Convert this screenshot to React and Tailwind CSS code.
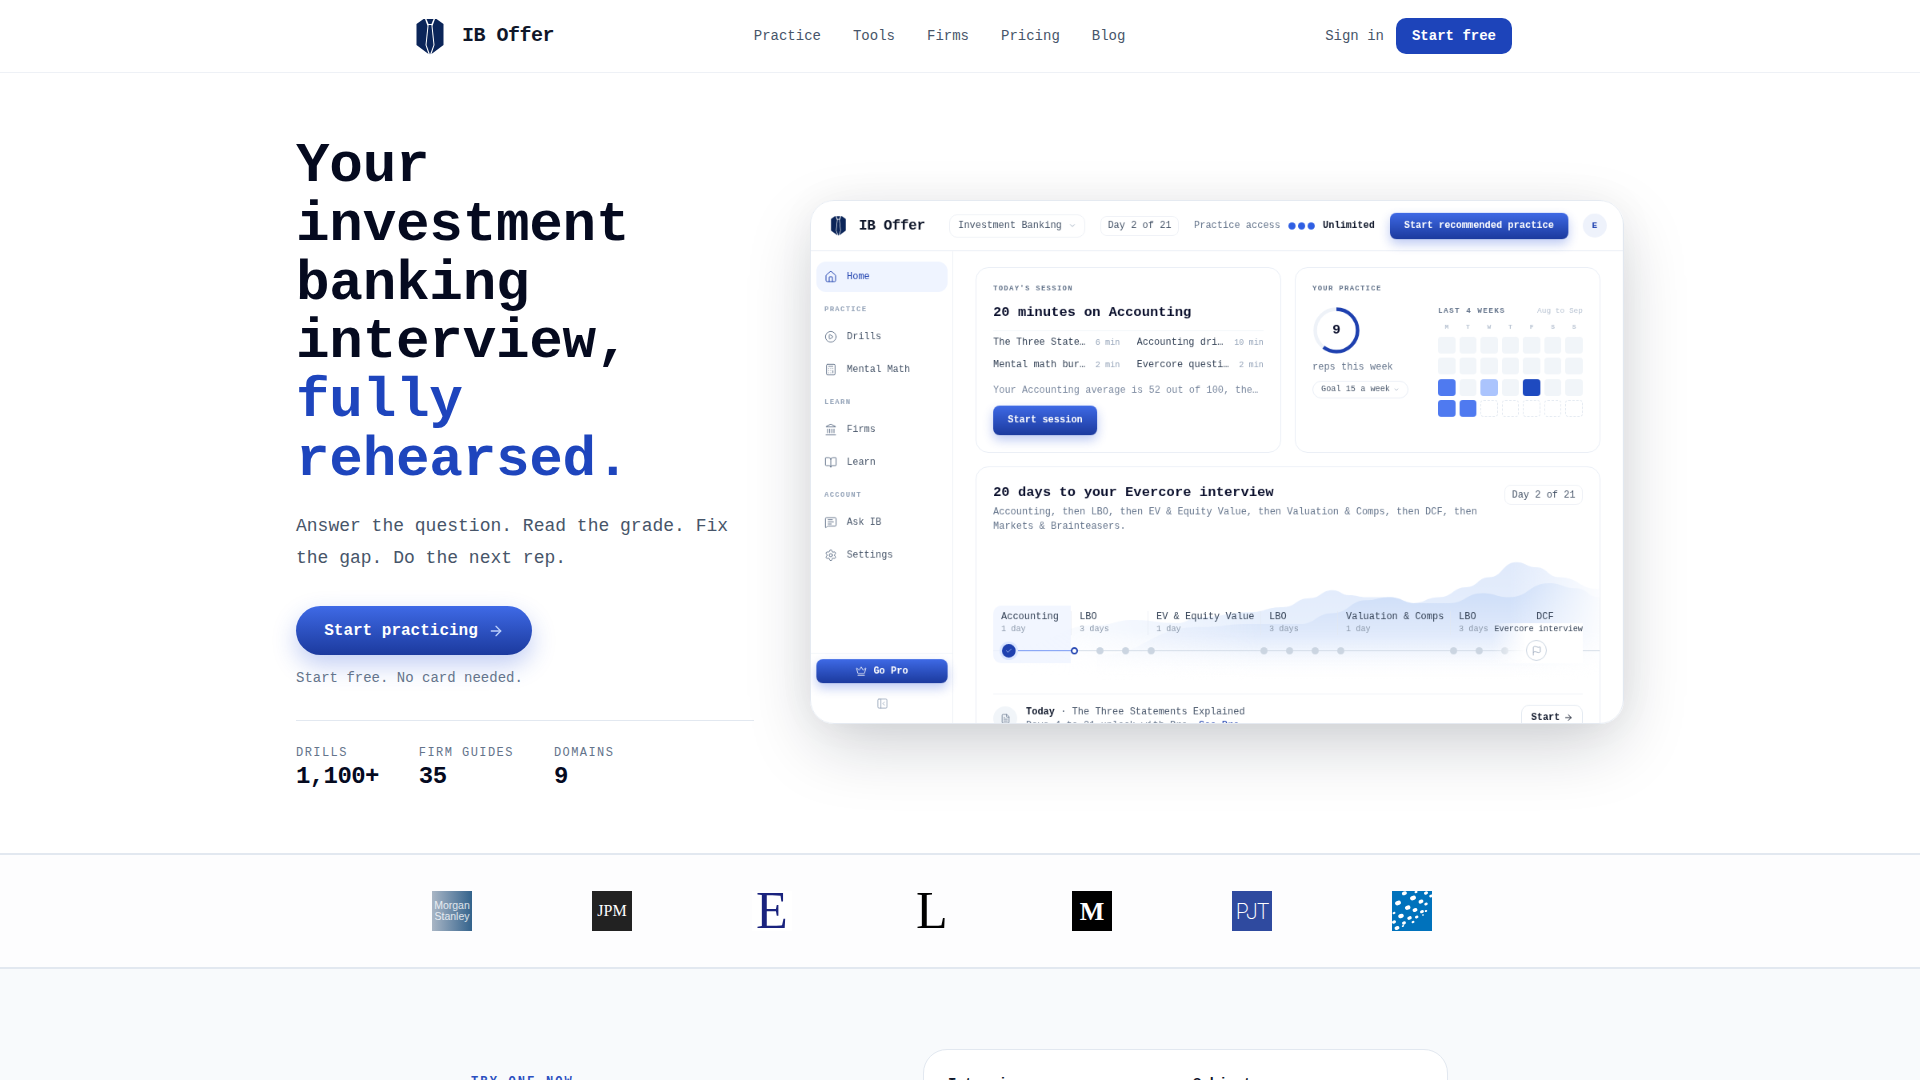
import React from 'react'
import {
    ArrowRight,
    BookOpen,
    Calculator,
    Check,
    ChevronDown,
    CirclePlay,
    Crown,
    FileText,
    Flag,
    House,
    Landmark,
    MessageSquareText,
    PanelLeftClose,
    Settings,
} from 'lucide-react'

const mono = { fontFamily: '"Liberation Mono", monospace' }

const LogoMark = ({ className }) => (
    <svg viewBox="0 0 30 38" className={className}>
        <path d="M8.5 2 L1.5 7 V28 L13.5 37 L10.5 28 L12.5 9 L10 2 Z" fill="#0b2559" />
        <path d="M21.5 2 L28.5 7 V28 L16.5 37 L19.5 28 L17.5 9 L20 2 Z" fill="#0b2559" />
        <path d="M11.5 2 H18.5 L16.5 7 H13.5 Z" fill="#0b2559" />
        <path d="M13.6 8 H16.4 L18.5 28 L15 37.5 L11.5 28 Z" fill="#0b2559" />
    </svg>
)

const blueBtn = 'bg-gradient-to-b from-[#3f6ae6] to-[#1c3a9e] text-white font-bold shadow-[0_6px_14px_rgba(37,78,216,0.3)]'

const NavItem = ({ icon: Icon, label, active }) => (
    <div className={`flex items-center gap-[12px] h-[38px] pl-[10px] rounded-[12px] text-[12px] font-medium ${active ? 'bg-[#eff4ff] text-[#1e40af]' : 'text-[#475569]'}`}>
        <Icon size={16} strokeWidth={1.5} className={active ? 'text-[#1e40af]' : 'text-[#64748b]'} />
        {label}
    </div>
)

const SideLabel = ({ children }) => (
    <div className="mt-[17px] mb-[9px] h-[11px] pl-[10px] text-[9px] leading-[11px] font-bold tracking-[0.14em] text-[#94a3b8]">{children}</div>
)

const Eyebrow = ({ children }) => (
    <div className="text-[9px] leading-[11px] font-bold tracking-[0.14em] text-[#64748b]">{children}</div>
)

const SessionItem = ({ title, mins }) => (
    <div className="flex items-center justify-between gap-3 min-w-0">
        <span className="truncate text-[12px] leading-[15px] text-[#334155]">{title}</span>
        <span className="shrink-0 text-[10.24px] text-[#94a3b8]">{mins}</span>
    </div>
)

// 0 empty, 1 light, 2 mid, 3 dark, 4 not reached yet
const calendar = [0, 0, 0, 0, 0, 0, 0, 0, 0, 0, 0, 0, 0, 0, 2, 0, 1, 0, 3, 0, 0, 2, 2, 4, 4, 4, 4, 4]
const cellStyles = {
    0: 'bg-[#f1f5f9]',
    1: 'bg-[#abc4fd]',
    2: 'bg-[#4f7af0]',
    3: 'bg-[#1e4ac0]',
    4: 'border border-dashed border-[#e2e8f0]',
}

const Track = ({ dots }) => (
    <div className="flex items-center gap-[23px] h-[30px] mt-[4.5px] relative">
        {Array.from({ length: dots }).map((_, i) => (
            <span key={i} className="w-[9px] h-[9px] rounded-full bg-[#cbd5e1]" />
        ))}
    </div>
)

const Segment = ({ name, days, width, dots, children }) => (
    <div className={`relative shrink-0 ${width}`}>
        <div className="mt-[7.5px] h-[30px] pl-[10px] border-l border-[#e2e8f0]/60">
            <div className="text-[12px] leading-[15px] font-medium whitespace-nowrap text-[#334155]">{name}</div>
            <div className="text-[10.24px] leading-[15px] text-[#8b98aa]">{days}</div>
        </div>
        {children || <Track dots={dots} />}
    </div>
)

const smooth = (pts) => {
    let d = `M${pts[0][0]} ${pts[0][1]}`
    for (let i = 1; i < pts.length; i++) {
        const [x0, y0] = pts[i - 1]
        const [x1, y1] = pts[i]
        const mx = (x0 + x1) / 2
        d += ` C${mx} ${y0} ${mx} ${y1} ${x1} ${y1}`
    }
    return d
}

const upper = [[40, 90], [120, 70], [156, 65], [200, 68], [223, 62], [273, 57], [306, 52], [333, 43], [356, 35], [373, 40], [390, 42], [413, 42], [436, 48], [463, 42], [490, 32], [513, 22], [540, 7], [560, 12], [583, 22], [623, 34]]
const lower = [[120, 100], [223, 72], [273, 69], [323, 69], [356, 58], [390, 45], [413, 42], [440, 48], [473, 48], [506, 38], [533, 42], [573, 28], [600, 33], [623, 42]]

const Ridges = () => (
    <svg viewBox="0 0 623 125" className="absolute left-0 top-[110px] w-[779px] h-[156px]">
        <defs>
            <linearGradient id="fadeUp" x1="0" y1="0" x2="0" y2="125" gradientUnits="userSpaceOnUse">
                <stop offset="0" stopColor="#dfe9fb" />
                <stop offset="0.6" stopColor="#e8f0fd" />
                <stop offset="1" stopColor="#ffffff" stopOpacity="0" />
            </linearGradient>
            <linearGradient id="fadeLow" x1="0" y1="0" x2="0" y2="125" gradientUnits="userSpaceOnUse">
                <stop offset="0.2" stopColor="#c9dbf8" />
                <stop offset="0.65" stopColor="#dfe9fb" stopOpacity="0.8" />
                <stop offset="1" stopColor="#ffffff" stopOpacity="0" />
            </linearGradient>
            <linearGradient id="fadeSide" x1="0" y1="0" x2="1" y2="0">
                <stop offset="0.05" stopColor="#000" />
                <stop offset="0.45" stopColor="#fff" />
                <stop offset="0.86" stopColor="#fff" />
                <stop offset="1" stopColor="#222" />
            </linearGradient>
            <mask id="sideMask">
                <rect width="623" height="125" fill="url(#fadeSide)" />
            </mask>
        </defs>
        <g mask="url(#sideMask)">
            <path d={`${smooth(upper)} V125 H40 Z`} fill="url(#fadeUp)" />
            <path d={`${smooth(lower)} V125 H120 Z`} fill="url(#fadeLow)" />
        </g>
    </svg>
)

const Mockup = () => (
    <div className="w-[814px] h-[524px] shrink-0 rounded-[24px] shadow-[0_24px_70px_-8px_rgba(15,23,42,0.22),0_0_40px_rgba(15,23,42,0.04)]">
        <div className="w-[1017px] h-[655px] origin-top-left scale-[0.8] will-change-transform bg-white rounded-[30px] border border-[#e2e8f0] overflow-hidden flex flex-col" style={mono}>
            <div className="h-[63px] shrink-0 border-b border-[#e8edf5] flex items-center pl-[24px] whitespace-nowrap">
                <LogoMark className="w-[21px] h-[26px] shrink-0" />
                <span className="ml-[15px] w-[83px] shrink-0 text-[18px] font-bold tracking-tight text-[#0f172a]">IB Offer</span>
                <div className="ml-[30px] h-[29px] w-[170px] shrink-0 rounded-[10px] border border-[#eef1f6] flex items-center justify-center gap-2 text-[12px] text-[#475569]">
                    Investment Banking
                    <ChevronDown size={10} className="text-[#94a3b8]" />
                </div>
                <div className="ml-[19px] h-[25px] w-[98px] shrink-0 rounded-[8px] border border-[#eef1f6] flex items-center justify-center text-[12px] text-[#475569]">Day 2 of 21</div>
                <span className="ml-[19px] shrink-0 text-[12px] text-[#64748b]">Practice access</span>
                <div className="ml-[10px] flex gap-[3px] shrink-0">
                    <span className="w-[9px] h-[9px] rounded-full bg-[#2f5fe3]" />
                    <span className="w-[9px] h-[9px] rounded-full bg-[#2f5fe3]" />
                    <span className="w-[9px] h-[9px] rounded-full bg-[#2f5fe3]" />
                </div>
                <span className="ml-[10px] shrink-0 text-[12px] font-bold text-[#0f172a]">Unlimited</span>
                <div className={`ml-[19px] h-[33px] w-[223px] shrink-0 rounded-[8px] flex items-center justify-center text-[12px] ${blueBtn}`}>Start recommended practice</div>
                <div className="ml-[18px] w-[30px] h-[30px] shrink-0 rounded-full bg-[#eef2fb] flex items-center justify-center text-[11px] font-bold text-[#1e40af]">E</div>
            </div>

            <div className="flex flex-1 min-h-0">
                <div className="w-[178px] shrink-0 border-r border-[#eef1f6] flex flex-col">
                    <div className="pl-[7px] pr-[6px] pt-[13px] flex flex-col">
                        <NavItem icon={House} label="Home" active />
                        <SideLabel>PRACTICE</SideLabel>
                        <NavItem icon={CirclePlay} label="Drills" />
                        <div className="mt-[3px]"><NavItem icon={Calculator} label="Mental Math" /></div>
                        <SideLabel>LEARN</SideLabel>
                        <NavItem icon={Landmark} label="Firms" />
                        <div className="mt-[3px]"><NavItem icon={BookOpen} label="Learn" /></div>
                        <SideLabel>ACCOUNT</SideLabel>
                        <NavItem icon={MessageSquareText} label="Ask IB" />
                        <div className="mt-[3px]"><NavItem icon={Settings} label="Settings" /></div>
                    </div>
                    <div className="mt-auto border-t border-[#f1f5f9] pl-[7px] pr-[6px] pt-[7px] pb-[17px]">
                        <div className={`h-[30px] rounded-[8px] flex items-center justify-center gap-2 text-[12px] ${blueBtn}`}>
                            <Crown size={14} strokeWidth={1.5} />
                            Go Pro
                        </div>
                        <div className="mt-[18px] flex justify-center">
                            <PanelLeftClose size={15} strokeWidth={1.5} className="text-[#94a3b8]" />
                        </div>
                    </div>
                </div>

                <div className="flex-1 min-w-0 px-[28px] pt-[20px]">
                    <div className="grid grid-cols-2 gap-[17px] h-[232px]">
                        <div className="rounded-[16px] border border-[#e8edf5] px-[21px] pt-[21px] min-w-0">
                            <Eyebrow>TODAY'S SESSION</Eyebrow>
                            <h3 className="mt-[13.5px] text-[17.2px] leading-[20px] font-bold text-[#0a0f2c]">20 minutes on Accounting</h3>
                            <div className="mt-[12.5px] border-t border-[#f1f5f9] pt-[7px] grid grid-cols-2 gap-x-[21px] gap-y-[12.5px]">
                                <SessionItem title="The Three Statements Explained" mins="6 min" />
                                <SessionItem title="Accounting drill set" mins="10 min" />
                                <SessionItem title="Mental math burst" mins="2 min" />
                                <SessionItem title="Evercore question set" mins="2 min" />
                            </div>
                            <p className="mt-[17px] truncate text-[12px] leading-[15px] text-[#7c8aa0]">Your Accounting average is 52 out of 100, the lowest of your domains.</p>
                            <div className={`mt-[10.5px] h-[37px] w-[130px] rounded-[8px] flex items-center justify-center text-[12px] ${blueBtn}`}>Start session</div>
                        </div>

                        <div className="rounded-[16px] border border-[#e8edf5] px-[21px] pt-[21px] flex justify-between">
                            <div className="w-[120px]">
                                <Eyebrow>YOUR PRACTICE</Eyebrow>
                                <div className="relative mt-[17px] w-[58px] h-[58px] ml-[1px]">
                                    <svg viewBox="0 0 58 58" className="w-full h-full -rotate-90">
                                        <circle cx="29" cy="29" r="26.5" fill="none" stroke="#eef2f8" strokeWidth="4.5" />
                                        <circle cx="29" cy="29" r="26.5" fill="none" stroke="#1e40af" strokeWidth="4.5" strokeDasharray="100 167" />
                                    </svg>
                                    <div className="absolute inset-0 flex items-center justify-center text-[17px] font-bold text-[#0a0f2c]">9</div>
                                </div>
                                <div className="mt-[10px] text-[12px] leading-[15px] text-[#64748b]">reps this week</div>
                                <div className="mt-[9px] h-[22px] rounded-full border border-[#e8edf5] flex items-center justify-center gap-1 text-[10.24px] text-[#475569] whitespace-nowrap">
                                    Goal 15 a week
                                    <ChevronDown size={8} className="text-[#94a3b8]" />
                                </div>
                            </div>
                            <div className="w-[181px] pt-[26px]">
                                <div className="flex justify-between items-center h-[14px]">
                                    <span className="text-[9.5px] font-bold tracking-[0.14em] text-[#64748b]">LAST 4 WEEKS</span>
                                    <span className="text-[9.5px] text-[#b8c3d2]">Aug to Sep</span>
                                </div>
                                <div className="grid grid-cols-7 gap-x-[5px] mt-[8px] text-center text-[8px] leading-[10px] font-bold text-[#b8c3d2]">
                                    {['M', 'T', 'W', 'T', 'F', 'S', 'S'].map((d, i) => <span key={i}>{d}</span>)}
                                </div>
                                <div className="grid grid-cols-7 gap-x-[5px] gap-y-[5.3px] mt-[7px]">
                                    {calendar.map((c, i) => (
                                        <span key={i} className={`h-[21px] rounded-[4px] ${cellStyles[c]}`} />
                                    ))}
                                </div>
                            </div>
                        </div>
                    </div>

                    <div className="relative mt-[17px] h-[400px] rounded-[16px] border border-[#e8edf5] px-[21px] pt-[22px] overflow-hidden">
                        <Ridges />
                        <div className="relative">
                            <div className="flex justify-between items-start">
                                <div className="w-[640px]">
                                    <h3 className="text-[17.2px] leading-[20px] font-bold text-[#0a0f2c]">20 days to your Evercore interview</h3>
                                    <p className="mt-[6px] text-[12px] leading-[17.5px] text-[#64748b]">Accounting, then LBO, then EV &amp; Equity Value, then Valuation &amp; Comps, then DCF, then Markets &amp; Brainteasers.</p>
                                </div>
                                <div className="h-[25px] w-[98px] rounded-[8px] border border-[#eef1f6] bg-white flex items-center justify-center text-[12px] text-[#475569]">Day 2 of 21</div>
                            </div>

                            <div className="relative mt-[89.5px] h-[72px] flex">
                                <div className="absolute left-0 -right-[21px] top-[56.5px] h-px bg-[#cbd5e1]" />
                                <div className="relative shrink-0 w-[97px] rounded-l-[10px] bg-[#eff4ff]/80">
                                    <div className="mt-[7.5px] h-[30px] pl-[10px]">
                                        <div className="text-[12px] leading-[15px] font-medium text-[#334155]">Accounting</div>
                                        <div className="text-[10.24px] leading-[15px] text-[#8b98aa]">1 day</div>
                                    </div>
                                    <div className="relative h-[30px] mt-[4.5px] flex items-center pl-[10.5px]">
                                        <div className="absolute left-[19px] -right-[4px] top-[14px] h-[1.5px] bg-[#4f7af0]" />
                                        <span className="relative w-[17px] h-[17px] rounded-full bg-[#1e40af] ring-[3px] ring-[#dbe6ff] flex items-center justify-center">
                                            <Check size={9} className="text-[#bcd0fb]" />
                                        </span>
                                    </div>
                                </div>
                                <Segment name="LBO" days="3 days" width="w-[96px]">
                                    <div className="flex items-center gap-[23px] h-[30px] mt-[4.5px] relative">
                                        <span className="w-[9px] h-[9px] rounded-full bg-white border-2 border-[#1e40af]" />
                                        <span className="w-[9px] h-[9px] rounded-full bg-[#cbd5e1]" />
                                        <span className="w-[9px] h-[9px] rounded-full bg-[#cbd5e1]" />
                                    </div>
                                </Segment>
                                <Segment name="EV & Equity Value" days="1 day" width="w-[141px]" dots={1} />
                                <Segment name="LBO" days="3 days" width="w-[96px]" dots={3} />
                                <Segment name="Valuation & Comps" days="1 day" width="w-[141px]" dots={1} />
                                <Segment name="LBO" days="3 days" width="w-[96px]" dots={3} />
                                <div className="relative flex-1">
                                    <div className="mt-[7.5px] h-[15px] pl-[12px] text-[12px] leading-[15px] font-medium text-[#334155]">DCF</div>
                                    <div className="absolute -left-[44px] right-0 top-[22.5px] bottom-0 bg-gradient-to-r from-white/0 to-white to-[38%]" />
                                    <div className="absolute right-0 top-[22.5px] text-[10.24px] leading-[15px] whitespace-nowrap text-[#334155]">Evercore interview</div>
                                    <div className="absolute left-[-1px] top-[43.5px] w-[26px] h-[26px] rounded-full bg-white border border-[#cbd5e1] flex items-center justify-center">
                                        <Flag size={13} strokeWidth={1.5} className="text-[#94a3b8]" />
                                    </div>
                                </div>
                            </div>

                            <div className="mt-[38.5px] border-t border-[#eef1f6] pt-[15px] flex items-start">
                                <div className="w-[30px] h-[30px] rounded-full bg-[#f1f5f9] flex items-center justify-center shrink-0">
                                    <FileText size={13} strokeWidth={1.5} className="text-[#64748b]" />
                                </div>
                                <div className="ml-[11px] mt-[-1px] flex-1 text-[12px] leading-[17px] text-[#475569]">
                                    <div><span className="font-bold text-[#0f172a]">Today</span> · The Three Statements Explained</div>
                                    <div className="text-[#64748b]">Days 4 to 21 unlock with Pro. <span className="text-[#1e40af]">See Pro</span></div>
                                </div>
                                <div className="mt-[-2px] h-[32px] w-[77px] rounded-[10px] border border-[#e2e8f0] flex items-center justify-center gap-1 text-[12px] font-bold text-[#0f172a]">
                                    Start
                                    <ArrowRight size={12} />
                                </div>
                            </div>
                        </div>
                    </div>
                </div>
            </div>
        </div>
    </div>
)

const FirmLogo = ({ className, children }) => (
    <div className={`w-10 h-10 shrink-0 flex items-center justify-center overflow-hidden ${className}`}>{children}</div>
)

const dots = [
    [12.4, 2.3, 2.5], [24, 1, 1.5], [34, 2, 2], [39, 5, 1.8], [21, 7, 3], [29, 10.6, 2.5], [34, 13, 1.8],
    [6, 12, 3], [15.7, 16.6, 2.8], [23, 19, 2.5], [30, 20.7, 2], [34, 20, 1.3],
    [2, 22, 1.5], [9, 25, 2.8], [17.5, 27, 2.3], [24.7, 26, 1.8], [31, 24, 1],
    [2, 31, 2], [12, 32, 2], [21, 31, 1.5], [5, 37, 2.5], [11, 35, 1.2],
]

const Stat = ({ label, value }) => (
    <div>
        <div className="text-[12px] leading-[16px] tracking-[0.12em] text-[#64748b]">{label}</div>
        <div className="text-[24px] leading-[32px] font-bold tracking-tight text-[#050a1f]">{value}</div>
    </div>
)

export default function App() {
    return (
        <div className="min-h-screen bg-white overflow-x-hidden" style={mono}>
            <header className="h-[73px] border-b border-[#eef1f6]">
                <div className="max-w-6xl mx-auto h-full px-6 flex items-center justify-between">
                    <div className="flex items-center">
                        <LogoMark className="ml-[7px] w-[30px] h-[38px]" />
                        <span className="ml-[17px] text-[20px] font-bold tracking-tight text-[#0f172a]">IB Offer</span>
                    </div>
                    <nav className="flex items-center gap-8 text-sm text-[#475569]">
                        <span>Practice</span>
                        <span>Tools</span>
                        <span>Firms</span>
                        <span>Pricing</span>
                        <span>Blog</span>
                    </nav>
                    <div className="flex items-center gap-3 text-sm">
                        <span className="text-[#475569]">Sign in</span>
                        <span className="h-9 px-4 rounded-[10px] flex items-center bg-[#1d44ba] text-white font-bold">Start free</span>
                    </div>
                </div>
            </header>

            <section className="h-[780px] px-[296px] flex items-start justify-between gap-[56px]">
                <div className="w-[458px] shrink-0 pt-[64px]">
                    <h1 className="text-[56px] leading-[1.05] font-bold tracking-[-0.005em] text-[#050a1f]">
                        Your investment banking interview, <span className="text-[#1e45bd]">fully rehearsed.</span>
                    </h1>
                    <p className="mt-[20.5px] text-[18px] leading-[32px] text-[#475569]">Answer the question. Read the grade. Fix the gap. Do the next rep.</p>
                    <div className={`mt-[32px] w-[236px] h-[49px] rounded-full flex items-center justify-center gap-[10px] text-base ${blueBtn} shadow-[0_10px_24px_rgba(37,78,216,0.28)]`}>
                        Start practicing
                        <ArrowRight size={16} className="text-[#bcd0fb]" />
                    </div>
                    <p className="mt-[12.5px] text-sm text-[#64748b]">Start free. No card needed.</p>
                    <div className="mt-[32.5px] border-t border-[#e2e8f0] pt-[24px] flex gap-10">
                        <Stat label="DRILLS" value="1,100+" />
                        <Stat label="FIRM GUIDES" value="35" />
                        <Stat label="DOMAINS" value="9" />
                    </div>
                </div>
                <div className="pt-[127px]">
                    <Mockup />
                </div>
            </section>

            <section className="border-y-2 border-[#e2e8f0] bg-[#fdfdfe] py-9">
                <div className="max-w-[1104px] mx-auto pl-[24px] flex gap-[120px]">
                    <FirmLogo className="bg-gradient-to-r from-[#a9b6c5] to-[#33638c]">
                        <span className="text-[10.5px] leading-[11px] text-white/80 text-center" style={{ fontFamily: '"Liberation Sans", sans-serif' }}>Morgan Stanley</span>
                    </FirmLogo>
                    <FirmLogo className="bg-[#222222]">
                        <span className="text-[16px] text-white" style={{ fontFamily: '"Liberation Serif", serif' }}>JPM</span>
                    </FirmLogo>
                    <FirmLogo className="bg-white">
                        <span className="text-[52px] leading-none text-[#1a237e]" style={{ fontFamily: '"Liberation Serif", serif' }}>E</span>
                    </FirmLogo>
                    <FirmLogo className="bg-transparent">
                        <span className="text-[52px] leading-none text-black" style={{ fontFamily: '"Liberation Serif", serif' }}>L</span>
                    </FirmLogo>
                    <FirmLogo className="bg-black">
                        <span className="text-[26px] font-bold text-white" style={{ fontFamily: '"Liberation Serif", serif' }}>M</span>
                    </FirmLogo>
                    <FirmLogo className="bg-[#2f4a9f]">
                        <span className="text-[22px] font-extralight tracking-[-1.5px] text-white" style={{ fontFamily: 'Inter, sans-serif' }}>PJT</span>
                    </FirmLogo>
                    <FirmLogo className="bg-[#0072bc]">
                        <svg viewBox="0 0 40 40" className="w-10 h-10">
                            {dots.map(([cx, cy, r], i) => (
                                <ellipse key={i} cx={cx} cy={cy} rx={r} ry={r * 0.75} transform={`rotate(-20 ${cx} ${cy})`} fill="#fff" />
                            ))}
                        </svg>
                    </FirmLogo>
                </div>
            </section>

            <section className="bg-[#f8fafc] pt-20 pb-20 flex">
                <div className="ml-[471px] w-[452px] shrink-0 pt-[25px] text-[12px] leading-[16px] font-bold tracking-[0.18em] text-[#2b4fc0]">TRY ONE NOW</div>
                <div className="w-[525px] h-[400px] rounded-[24px] border border-[#e2e8f0] bg-white px-6 pt-6">
                    <div className="flex text-[14px] font-bold text-[#0f172a]">
                        <span className="w-[245px]">Interviewer</span>
                        <span>Subject</span>
                    </div>
                </div>
            </section>
        </div>
    )
}
